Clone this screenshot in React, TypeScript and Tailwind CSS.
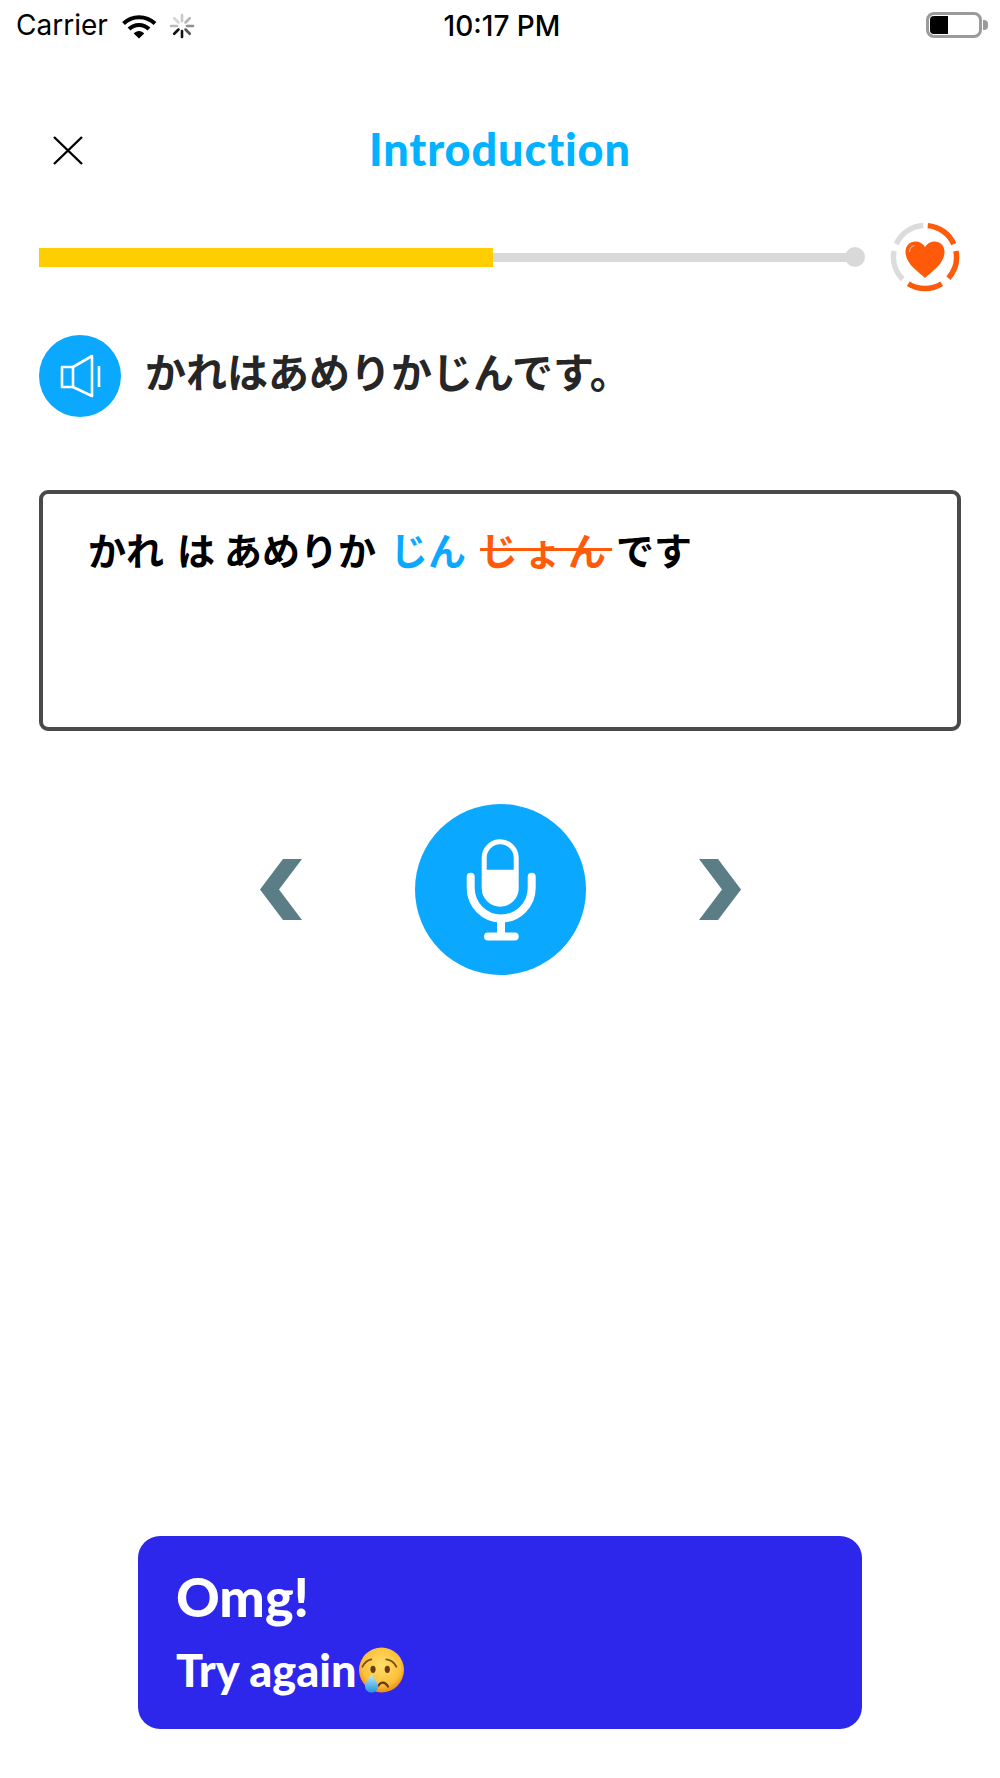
import React from "react";

const ARC_R = 31.5;

function arcPath(from: number, to: number) {
  const pt = (deg: number) => {
    const a = ((deg - 90) * Math.PI) / 180;
    return `${36 + ARC_R * Math.cos(a)} ${36 + ARC_R * Math.sin(a)}`;
  };
  return `M${pt(from)} A${ARC_R} ${ARC_R} 0 0 1 ${pt(to)}`;
}

function Wifi() {
  return (
    <svg width="35" height="25" viewBox="0 0 35 25" fill="none" stroke="#000" className="mt-[3px]">
      <path d="M1.5 9.5C10 1 24 1 33 9.5" strokeWidth="4" />
      <path d="M7 15C12.5 9.5 21.5 9.5 27 15" strokeWidth="4" />
      <path d="M11.7 19.5C14.5 16 19.5 16 22.2 19.5L17 24.5Z" fill="#000" stroke="none" />
    </svg>
  );
}

function Spinner() {
  const spokes = [0, 45, 90, 135, 180, 225, 270, 315];
  const tones = ["#c9c9c9", "#b5b5b5", "#8f8f8f", "#555", "#111", "#111", "#bbb", "#d5d5d5"];
  return (
    <svg width="26" height="26" viewBox="0 0 26 26" className="-ml-[2px] mt-[2px]">
      {spokes.map((deg, i) => (
        <line
          key={deg}
          x1="13"
          y1="2"
          x2="13"
          y2="8"
          stroke={tones[i]}
          strokeWidth="2.6"
          strokeLinecap="round"
          transform={`rotate(${deg} 13 13)`}
        />
      ))}
    </svg>
  );
}

function StatusBar() {
  return (
    <div className="grid grid-cols-3 items-center h-[50px] pl-[16px] pr-[12px] text-black font-['Inter',sans-serif] text-[28px]">
      <div className="flex items-center gap-[14px]">
        <span>Carrier</span>
        <Wifi />
        <Spinner />
      </div>
      <div className="text-center font-medium pt-[1px]">10:17 PM</div>
      <div className="flex justify-end items-center">
        <div className="w-[56px] h-[26px] border-[3px] border-[#9b9b9b] rounded-[8px] p-[1px]">
          <div className="w-[18px] h-full bg-black rounded-l-[4px]" />
        </div>
        <div className="w-[5px] h-[10px] ml-[1px] bg-[#9b9b9b] rounded-r-[4px]" />
      </div>
    </div>
  );
}

function Ring() {
  return (
    <svg width="72" height="72" viewBox="0 0 72 72" fill="none" strokeWidth="5.5">
      <path d={arcPath(5, 66)} stroke="#ff5a0a" />
      <path d={arcPath(79, 132)} stroke="#ff5a0a" />
      <path d={arcPath(148, 212)} stroke="#ff5a0a" />
      <path d={arcPath(225, 281)} stroke="#dcdcdc" />
      <path d={arcPath(294, 357)} stroke="#dcdcdc" />
      <path
        d="M36 57C30 51 16.5 43 16.5 31C16.5 24.5 21 20.5 26.5 20.5C30.5 20.5 34 22.5 36 26C38 22.5 41.5 20.5 45.5 20.5C51 20.5 55.5 24.5 55.5 31C55.5 43 42 51 36 57Z"
        fill="#ff5a0a"
      />
      <path d="M20.5 31C20.5 27 22.5 25 25.5 24.5" stroke="#ffb08a" strokeWidth="1.2" />
    </svg>
  );
}

function Speaker() {
  return (
    <div className="w-[82px] h-[82px] rounded-full bg-[#0ba8ff] shrink-0">
      <svg width="82" height="82" viewBox="0 0 82 82" fill="none" stroke="#fff" strokeWidth="2.6" strokeLinejoin="round">
        <path d="M23 32H34V52H23Z" />
        <path d="M34 32L53 21V61L34 52" />
        <path d="M60 31V52" />
      </svg>
    </div>
  );
}

function Mic() {
  return (
    <svg width="171" height="171" viewBox="0 0 171 171" fill="none" stroke="#fff" strokeLinecap="round">
      <rect x="69.2" y="37.8" width="32" height="62.4" rx="16" strokeWidth="5" />
      <path d="M69.2 65.7H101.2V84.2A16 16 0 0 1 69.2 84.2Z" fill="#fff" stroke="none" />
      <path d="M55.7 72.7V84A30.5 30.5 0 0 0 116.7 84V72.7" strokeWidth="8" />
      <path d="M86 114V132" strokeWidth="8" strokeLinecap="butt" />
      <path d="M73 132.5H99.7" strokeWidth="8" />
    </svg>
  );
}

function Chevron({ flip }: { flip?: boolean }) {
  return (
    <svg width="42" height="61" viewBox="0 0 42 61" className={flip ? "-scale-x-100" : ""}>
      <path d="M42 0H23L0 30.5L23 61H42L19 30.5Z" fill="#5a7d86" />
    </svg>
  );
}

function CryEmoji() {
  return (
    <svg width="47" height="46" viewBox="0 0 47 46" className="shrink-0 ml-[1px]">
      <defs>
        <radialGradient id="face" cx="50%" cy="40%" r="60%">
          <stop offset="0%" stopColor="#ffdf6b" />
          <stop offset="72%" stopColor="#fbc03a" />
          <stop offset="100%" stopColor="#e98a14" />
        </radialGradient>
        <linearGradient id="tear" x1="0" y1="0" x2="0" y2="1">
          <stop offset="0%" stopColor="#c4eefb" />
          <stop offset="100%" stopColor="#1f93dc" />
        </linearGradient>
      </defs>
      <circle cx="23.5" cy="23" r="22.5" fill="url(#face)" />
      <path d="M4.5 19.7C6.5 15.5 9.5 13 13.3 12.3M38.3 19.7C36.5 15.5 33 13 28.3 12.3" stroke="#7a4a10" strokeWidth="1.8" fill="none" strokeLinecap="round" />
      <ellipse cx="15" cy="22.3" rx="2.6" ry="3.6" fill="#6b3c0a" />
      <ellipse cx="29.3" cy="22.3" rx="2.6" ry="3.6" fill="#6b3c0a" />
      <path d="M20.5 38.5C23 34.5 27 34.5 30 39.5" stroke="#6b3c0a" strokeWidth="2.2" fill="none" strokeLinecap="round" />
      <path d="M13.5 27C15.5 32 20 34.5 20 39.5C20 43 17 45.6 13.5 45.6C10 45.6 7 43 7 39.5C7 34.5 11.5 32 13.5 27Z" fill="url(#tear)" />
    </svg>
  );
}

export default function App() {
  return (
    <div className="w-[1000px] h-[1778px] bg-white flex flex-col overflow-hidden font-['Inter',sans-serif]">
      <StatusBar />

      {/* header */}
      <div className="grid grid-cols-[1fr_auto_1fr] items-center mt-[73px] pl-[53px] h-[54px]">
        <svg width="30" height="30" viewBox="0 0 30 30" stroke="#000" strokeWidth="2.4" fill="none">
          <path d="M1 2L29 29M29 2L1 29" />
        </svg>
        <div className="text-[45px] leading-[46px] -mt-[3px] tracking-[0.9px] font-black text-[#00b2ff] font-['Lato',sans-serif] -ml-[53px] [font-variant-ligatures:none]">Introduction</div>
        <div />
      </div>

      {/* progress */}
      <div className="flex items-center mt-[44px] pl-[39px] pr-[39px] h-[72px]">
        <div className="flex items-center flex-1">
          <div className="w-[454px] h-[19px] bg-[#ffce00]" />
          <div className="flex-1 h-[9px] bg-[#d9d9d9]" />
          <div className="w-[20px] h-[20px] rounded-full bg-[#d9d9d9] -ml-[10px]" />
        </div>
        <div className="ml-[24px]">
          <Ring />
        </div>
      </div>

      {/* prompt */}
      <div className="flex items-center gap-[24px] mt-[42px] pl-[39px]">
        <Speaker />
        <div className="text-[41px] leading-[60px] -mt-[12px] font-bold text-[#262626] font-['Noto_Sans_CJK_JP',sans-serif]">かれはあめりかじんです。</div>
      </div>

      {/* answer box */}
      <div className="mx-[39px] mt-[73px] h-[241px] border-[4px] border-[#4a4a4a] rounded-[9px] pl-[45px] pt-[30px]">
        <div className="flex text-[38px] leading-[50px] font-bold text-black font-['Noto_Sans_CJK_JP',sans-serif]">
          <span>かれ</span>
          <span className="ml-[13px]">は</span>
          <span className="ml-[9px]">あめりか</span>
          <span className="ml-[14px] text-[#0ba8ff]">じん</span>
          <span className="ml-[14px] text-[#ff5a0a] line-through tracking-[6px]">じょん</span>
          <span className="ml-[4px]">です</span>
        </div>
      </div>

      {/* controls */}
      <div className="flex items-center justify-center mt-[73px] gap-[113px]">
        <Chevron />
        <div className="w-[171px] h-[171px] rounded-full bg-[#0ba8ff]">
          <Mic />
        </div>
        <Chevron flip />
      </div>

      {/* toast */}
      <div className="mt-auto mb-[49px] ml-[138px] w-[724px] h-[193px] bg-[#2d27ec] rounded-[22px] pl-[38px] text-white font-['Lato',sans-serif] font-black [font-variant-ligatures:none]">
        <div className="text-[54px] leading-[60px] mt-[31px]">Omg!</div>
        <div className="flex items-center text-[45px] leading-[50px] mt-[18px]">
          <span>Try again</span>
          <CryEmoji />
        </div>
      </div>
    </div>
  );
}
